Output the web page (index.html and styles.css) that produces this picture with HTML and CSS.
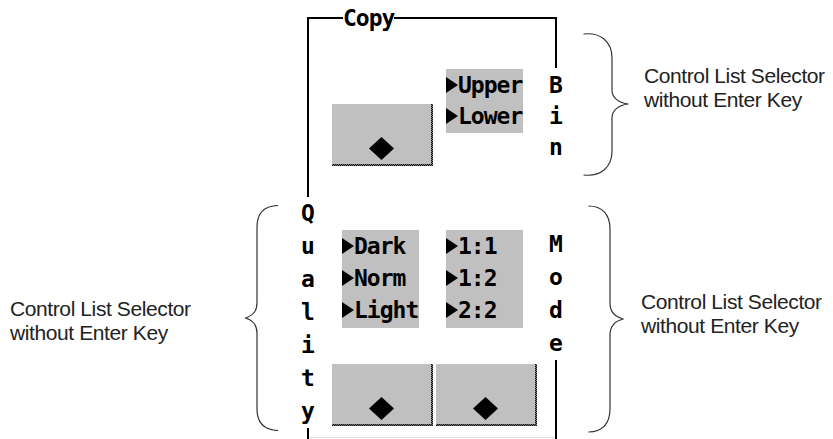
FILE: index.html
```html
<!DOCTYPE html>
<html lang="en">
<head>
    <meta charset="UTF-8">
    <meta name="viewport" content="width=device-width, initial-scale=1.0">
    <title>Copy - Control List Selectors</title>
    <link rel="stylesheet" href="styles.css">
</head>
<body>
    <div class="page">
        <div class="side side-left">
            <div class="note note-quality">
                <p class="note-text">Control List Selector<br>without Enter Key</p>
                <svg class="brace" width="34" height="226" viewBox="0 0 34 226">
                    <path d="M33,0.5 C20,1 12,8 12,22 L12,98 C12,106 7,111 0.5,113 C7,115 12,120 12,128 L12,204 C12,218 20,225 33,225.5"/>
                </svg>
            </div>
        </div>

        <div class="panel">
            <div class="title">
                <div class="corner corner-l"></div>
                <div class="legend">Copy</div>
                <div class="corner corner-r"></div>
            </div>
            <div class="frame">
                <div class="rail">
                    <div class="rule quality-top"></div>
                    <div class="vlabel quality">
                        <span>Q</span><span>u</span><span>a</span><span>l</span><span>i</span><span>t</span><span>y</span>
                    </div>
                    <div class="rule rule-fill"></div>
                </div>

                <div class="body">
                    <div class="controls">
                        <div class="btn btn-bin">
                            <div class="face">
                                <svg width="25" height="23" viewBox="0 0 25 23"><path d="M12.5 0 25 11.5 12.5 23 0 11.5Z"/></svg>
                            </div>
                        </div>
                        <ul class="list list-bin">
                            <li><span class="tri"></span>Upper</li>
                            <li><span class="tri"></span>Lower</li>
                        </ul>
                        <ul class="list list-quality">
                            <li><span class="tri"></span>Dark</li>
                            <li><span class="tri"></span>Norm</li>
                            <li><span class="tri"></span>Light</li>
                        </ul>
                        <ul class="list list-mode">
                            <li><span class="tri"></span>1:1</li>
                            <li><span class="tri"></span>1:2</li>
                            <li><span class="tri"></span>2:2</li>
                        </ul>
                        <div class="btn btn-quality">
                            <div class="face">
                                <svg width="25" height="23" viewBox="0 0 25 23"><path d="M12.5 0 25 11.5 12.5 23 0 11.5Z"/></svg>
                            </div>
                        </div>
                        <div class="btn btn-mode">
                            <div class="face">
                                <svg width="25" height="23" viewBox="0 0 25 23"><path d="M12.5 0 25 11.5 12.5 23 0 11.5Z"/></svg>
                            </div>
                        </div>
                    </div>
                    <div class="foot"></div>
                </div>

                <div class="rail">
                    <div class="rule bin-top"></div>
                    <div class="vlabel bin">
                        <span>B</span><span>i</span><span>n</span>
                    </div>
                    <div class="vlabel mode">
                        <span>M</span><span>o</span><span>d</span><span>e</span>
                    </div>
                    <div class="rule rule-fill"></div>
                </div>
            </div>
        </div>

        <div class="side side-right">
            <div class="note note-bin">
                <svg class="brace" width="46" height="145" viewBox="0 0 46 145">
                    <path d="M0.5,2 C18,0 29,10 29,26 L29,58 C29,66 36,71 45.5,72 C36,73 29,78 29,86 L29,119 C29,135 18,145 0.5,143"/>
                </svg>
                <p class="note-text">Control List Selector<br>without Enter Key</p>
            </div>
            <div class="note note-mode">
                <svg class="brace" width="36" height="228" viewBox="0 0 36 228">
                    <path d="M0.5,1 C14,1 22,9 22,24 L22,98 C22,107 27,112 35.5,114 C27,116 22,121 22,130 L22,204 C22,219 14,227 0.5,227"/>
                </svg>
                <p class="note-text">Control List Selector<br>without Enter Key</p>
            </div>
        </div>
    </div>
</body>
</html>
```

FILE: styles.css
```css
body {
    margin: 0;
    background: #fff;
}
.page {
    display: flex;
    width: 833px;
    height: 439px;
    overflow: hidden;
}

/* callouts */
.note {
    display: flex;
    color: #222;
    font: 21px/24px "Liberation Sans", Arial, sans-serif;
    letter-spacing: -0.4px;
}
.note-text {
    margin: 0;
    white-space: nowrap;
}
.brace {
    display: block;
    flex: none;
}
.brace path {
    fill: none;
    stroke: #333;
    stroke-width: 1.2;
}
.side-left {
    width: 296px;
    padding-top: 205px;
    box-sizing: border-box;
}
.note-quality {
    align-items: center;
    padding: 0 17px 0 10px;
}
.note-quality .note-text {
    flex: 1;
    padding-top: 5px;
}
.side-right {
    flex: 1;
}
.note-bin {
    margin: 32px 0 0 15px;
    gap: 15px;
    align-items: flex-start;
}
.note-bin .note-text {
    margin-top: 32px;
}
.note-mode {
    margin: 28px 0 0 20px;
    gap: 17px;
    align-items: center;
}
.note-mode .note-text {
    margin-bottom: 10px;
}

/* panel */
.panel {
    width: 272px;
    display: flex;
    flex-direction: column;
    font: bold 23px "DejaVu Sans Mono", monospace;
    color: #000;
}
.title {
    height: 35px;
    display: flex;
    padding: 0 11px;
}
.corner {
    height: 18px;
    align-self: flex-end;
    border-top: 2px solid #000;
    box-sizing: border-box;
}
.corner-l {
    width: 36px;
    border-left: 2px solid #000;
}
.corner-r {
    flex: 1;
    border-right: 2px solid #000;
}
.legend {
    line-height: 37px;
    letter-spacing: -1px;
    align-self: flex-start;
}
.frame {
    flex: 1;
    display: grid;
    grid-template-columns: 24px 1fr 24px;
}
.rail {
    display: flex;
    flex-direction: column;
    align-items: center;
}
.rule {
    width: 2px;
    background: #000;
}
.rule-fill {
    flex: 1;
}
.quality-top {
    height: 162px;
}
.bin-top {
    height: 33px;
}
.vlabel {
    text-align: center;
}
.vlabel span {
    display: block;
}
.vlabel.quality {
    line-height: 33px;
}
.vlabel.bin {
    line-height: 31px;
    margin-top: 2px;
}
.vlabel.mode {
    line-height: 33px;
    margin-top: 65px;
}

/* controls */
.body {
    display: flex;
    flex-direction: column;
}
.controls {
    display: grid;
    grid-template-columns: 101px 101px;
    column-gap: 3px;
    padding-left: 12px;
    align-items: start;
}
.btn {
    width: 101px;
    height: 62px;
    box-sizing: border-box;
    padding: 0 2px 2px 0;
    background: repeating-conic-gradient(#111 0 25%, #777 0 50%) 0 0 / 2px 2px;
}
.face {
    height: 100%;
    box-sizing: border-box;
    padding-bottom: 4px;
    background: #c0c0c0;
    display: flex;
    justify-content: center;
    align-items: flex-end;
}
.face svg {
    display: block;
}
.btn-bin {
    grid-column: 1;
    grid-row: 1;
    margin-top: 69px;
}
.btn-quality {
    grid-column: 1;
    grid-row: 3;
    margin-top: 36px;
}
.btn-mode {
    grid-column: 2;
    grid-row: 3;
    margin-top: 36px;
}
.list {
    list-style: none;
    margin: 0 0 0 10px;
    padding: 0 0 2px;
    width: 77px;
    background: #c0c0c0;
    line-height: 32px;
    letter-spacing: -1px;
    white-space: nowrap;
}
.list-bin {
    grid-column: 2;
    grid-row: 1;
    margin-top: 34px;
    padding: 1px 0;
    line-height: 31px;
}
.list-quality {
    grid-column: 1;
    grid-row: 2;
    margin-top: 64px;
}
.list-mode {
    grid-column: 2;
    grid-row: 2;
    margin-top: 64px;
}
.tri {
    display: inline-block;
    width: 0;
    height: 0;
    border-left: 12px solid #000;
    border-top: 8px solid transparent;
    border-bottom: 8px solid transparent;
    vertical-align: baseline;
}
.foot {
    height: 1px;
    margin: 11px -11px 0;
    background: #ddd;
}
```
